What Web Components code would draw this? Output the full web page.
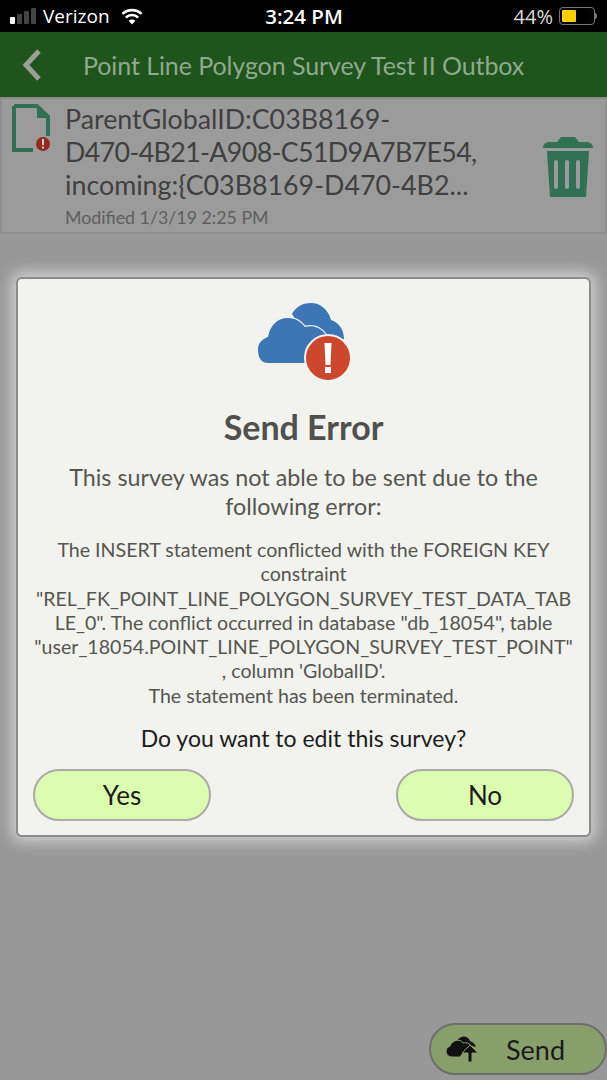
<!DOCTYPE html>
<html>
<head>
<meta charset="utf-8">
<style>
  html, body { margin: 0; padding: 0; background: #989898; }
  body { width: 607px; height: 1080px; overflow: hidden; position: relative; font-family: Lato, "Open Sans", sans-serif; }
  .tight { letter-spacing: -0.65px; }
</style>
</head>
<body>
<status-bar></status-bar>
<app-header>Point Line Polygon Survey Test II Outbox</app-header>
<outbox-row modified="Modified 1/3/19 2:25 PM">ParentGlobalID:C03B8169-<br><span class="tight">D470-4B21-A908-C51D9A7B7E54,</span><br>incoming:{C03B8169-D470-4B2...</outbox-row>
<send-error></send-error>
<send-button></send-button>

<script>
class StatusBar extends HTMLElement {
    connectedCallback() {
        this.attachShadow({ mode: 'open' });
        this.shadowRoot.innerHTML = `
            <style>
                :host { display: grid; grid-template-columns: 1fr auto 1fr; align-items: center; height: 32px; background: #000; color: #fff; font-family: "Open Sans", sans-serif; font-size: 19px; padding: 0 12px 0 10px; box-sizing: border-box; }
                .left, .right { display: flex; align-items: center; }
                .left { gap: 7px; }
                .right { justify-content: flex-end; gap: 6px; color: #ddd; font-size: 20px; }
                .time { font-size: 20.5px; font-weight: 600; margin-left: 3px; }
                .bars { display: flex; align-items: flex-end; gap: 2px; height: 16px; }
                .bars i { width: 5px; border-radius: 1px; background: #444; }
                .bars i:first-child { background: #fff; }
                .batt { width: 36px; height: 18px; box-sizing: border-box; border: 1px solid #777; border-radius: 4px; padding: 2px; position: relative; }
                .batt b { display: block; width: 14px; height: 100%; background: #ffcc00; border-radius: 1px; }
                .batt::after { content: ""; position: absolute; right: -3px; top: 5px; width: 2px; height: 6px; background: #777; border-radius: 0 2px 2px 0; }
            </style>
            <div class="left">
                <span class="bars"><i style="height:7px"></i><i style="height:10px"></i><i style="height:13px"></i><i style="height:16px"></i></span>
                <span>Verizon</span>
                <svg width="22" height="17" viewBox="0 0 20 16" style="margin-left:4px"><path d="M1 5.6a13 13 0 0 1 18 0" fill="none" stroke="#fff" stroke-width="2.4"/><path d="M4.2 8.9a8.4 8.4 0 0 1 11.6 0" fill="none" stroke="#fff" stroke-width="2.4"/><path d="M10 15.5l-3.2-3.4a4.6 4.6 0 0 1 6.4 0z" fill="#fff"/></svg>
            </div>
            <div class="time">3:24 PM</div>
            <div class="right"><span>44%</span><span class="batt"><b></b></span></div>
        `;
    }
}
customElements.define('status-bar', StatusBar);

class AppHeader extends HTMLElement {
    connectedCallback() {
        this.attachShadow({ mode: 'open' });
        this.shadowRoot.innerHTML = `
            <style>
                :host { display: flex; align-items: center; height: 65px; background: #1f541c; color: #8fa98d; font-size: 25px; letter-spacing: -0.08px; box-sizing: border-box; padding-left: 22px; }
                svg { flex: none; margin-right: 41px; }
            </style>
            <svg width="20" height="34" viewBox="0 0 20 34"><path d="M17 3L4 17l13 14" fill="none" stroke="#9a9f98" stroke-width="5"/></svg>
            <slot></slot>
        `;
    }
}
customElements.define('app-header', AppHeader);

class OutboxRow extends HTMLElement {
    connectedCallback() {
        this.attachShadow({ mode: 'open' });
        this.shadowRoot.innerHTML = `
            <style>
                :host { display: flex; height: 137px; box-sizing: border-box; background: #9b9b9b; border: 2px solid #8f8f8f; border-top-color: #8a8a8a; color: #404040; }
                .doc { flex: none; width: 63px; padding: 5px 0 0 10px; box-sizing: border-box; }
                .main { flex: 1; padding-top: 4px; font-size: 26.8px; line-height: 33px; white-space: nowrap; }
                .mod { font-size: 17.8px; line-height: 20px; color: #5f5f5f; margin-top: 5px; }
                .trash { flex: none; width: 50px; padding-top: 37px; margin-right: 12px; }
                svg { display: block; }
            </style>
            <div class="doc">
                <svg width="40" height="48" viewBox="0 0 40 48">
                    <path d="M2 2h23l11 11v19M21 46H2V2" fill="none" stroke="#307054" stroke-width="4"/>
                    <path d="M25 0l13 12v2H25z" fill="#307054"/>
                    <circle cx="31" cy="40" r="7" fill="#962a20"/>
                    <rect x="30" y="35" width="2" height="6" fill="#ccc"/><rect x="30" y="42.5" width="2" height="2" fill="#ccc"/>
                </svg>
            </div>
            <div class="main"><slot></slot><div class="mod">${this.getAttribute('modified')}</div></div>
            <div class="trash">
                <svg width="50" height="62" viewBox="0 0 50 62">
                    <path d="M0 12c0-4 3-6 7-6h7l4-5h14l4 5h7c4 0 7 2 7 6z" fill="#307054"/>
                    <path d="M4 15h42l-3 46H7z" fill="#307054"/>
                    <rect x="11" y="24" width="4" height="29" rx="2" fill="#9b9b9b"/><rect x="22" y="24" width="4" height="29" rx="2" fill="#9b9b9b"/><rect x="33" y="24" width="4" height="29" rx="2" fill="#9b9b9b"/>
                </svg>
            </div>
        `;
    }
}
customElements.define('outbox-row', OutboxRow);

class PillButton extends HTMLElement {
    connectedCallback() {
        this.attachShadow({ mode: 'open' });
        this.shadowRoot.innerHTML = `
            <style>
                :host { display: flex; align-items: center; justify-content: center; width: 178px; height: 52px; box-sizing: border-box; border: 2px solid #aaa; border-radius: 26px; background: #dcfdb0; color: #1c1c1c; font-size: 26px; }
            </style>
            <slot></slot>
        `;
    }
}
customElements.define('pill-button', PillButton);

class SendError extends HTMLElement {
    connectedCallback() {
        this.attachShadow({ mode: 'open' });
        this.shadowRoot.innerHTML = `
            <style>
                :host { position: absolute; left: 16px; top: 277px; width: 575px; height: 560px; box-sizing: border-box; padding-top: 24px; background: #f2f3ee; border: 2px solid #8b8b8b; border-radius: 6px; box-shadow: 0 0 14px 5px #cfcfcf; display: flex; flex-direction: column; align-items: center; text-align: center; color: #555551; }
                svg { display: block; }
                h2 { margin: 26px 0 0; font-size: 34px; line-height: 40px; font-weight: 700; color: #50504c; }
                .lead { margin: 16px 0 0; width: 500px; font-size: 23.3px; line-height: 29px; }
                .detail { margin: 17px 0 0; width: 550px; font-size: 19.6px; line-height: 24.3px; overflow-wrap: anywhere; }
                .ask { margin: 16px 0 0; font-size: 23px; line-height: 28px; color: #1c1c1c; }
                .actions { align-self: stretch; display: flex; justify-content: space-between; padding: 17px 15px 0; }
            </style>
            <svg width="92" height="78" viewBox="0 0 92 78">
                <path d="M34 11C38 3 46 0 53 0c9 0 17 6 20 17 7 2 13 9 13 19H50z" fill="#3c76b4"/>
                <path d="M10 60C3 60 0 54 0 47c0-7 4-11 10-13 2-12 10-19 20-19 8 0 13 4 17 9 8-2 15 0 21 8L50 60z" fill="#3c76b4" stroke="#f2f3ee" stroke-width="2.5" paint-order="stroke"/>
                <circle cx="70" cy="55" r="23" fill="#cc472c" stroke="#f2f3ee" stroke-width="2"/>
                <path d="M66.500 40h7l-1 22h-5z" fill="#fff"/><rect x="67" y="64" width="6" height="6" fill="#fff"/>
            </svg>
            <h2>Send Error</h2>
            <p class="lead">This survey was not able to be sent due to the following error:</p>
            <div class="detail">The INSERT statement conflicted with the FOREIGN KEY constraint<br>"REL_FK_POINT_LINE_POLYGON_SURVEY_TEST_DATA_TAB<br>LE_0". The conflict occurred in database "db_18054", table<br>"user_18054.POINT_LINE_POLYGON_SURVEY_TEST_POINT"<br>, column 'GlobalID'.<br>The statement has been terminated.</div>
            <p class="ask">Do you want to edit this survey?</p>
            <div class="actions"><pill-button>Yes</pill-button><pill-button>No</pill-button></div>
        `;
    }
}
customElements.define('send-error', SendError);

class SendButton extends HTMLElement {
    connectedCallback() {
        this.attachShadow({ mode: 'open' });
        this.shadowRoot.innerHTML = `
            <style>
                :host { position: absolute; left: 429px; top: 1023px; width: 178px; height: 52px; box-sizing: border-box; display: flex; align-items: center; border: 2px solid #6e6e6e; border-radius: 26px; background: #87a06b; color: #1b1b1b; font-size: 27px; padding-left: 15px; gap: 28px; }
            </style>
            <svg width="32" height="26" viewBox="0 0 32 26">
                <path d="M11 5c3-6 11-6 13 0 3 1 5 3 6 6l-7-2z" fill="#111"/>
                <path d="M6 21c-7 0-8-9-2-11 2-6 10-8 13-3 4-1 7 1 8 3l-5 3-6 8z" fill="#111" stroke="#87a06b" stroke-width="1"/>
                <path d="M24 9l8 8h-6v9h-4v-9h-6z" fill="#111" stroke="#87a06b" stroke-width="1"/>
            </svg>
            <span>Send</span>
        `;
    }
}
customElements.define('send-button', SendButton);
</script>
</body>
</html>
